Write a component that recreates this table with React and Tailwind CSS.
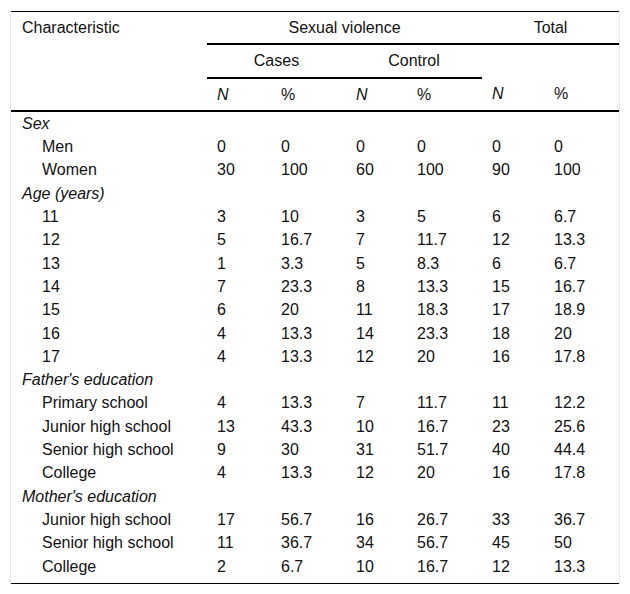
import React from 'react';

const groups = [
  {
    title: 'Sex',
    rows: [
      ['Men', '0', '0', '0', '0', '0', '0'],
      ['Women', '30', '100', '60', '100', '90', '100'],
    ],
  },
  {
    title: 'Age (years)',
    rows: [
      ['11', '3', '10', '3', '5', '6', '6.7'],
      ['12', '5', '16.7', '7', '11.7', '12', '13.3'],
      ['13', '1', '3.3', '5', '8.3', '6', '6.7'],
      ['14', '7', '23.3', '8', '13.3', '15', '16.7'],
      ['15', '6', '20', '11', '18.3', '17', '18.9'],
      ['16', '4', '13.3', '14', '23.3', '18', '20'],
      ['17', '4', '13.3', '12', '20', '16', '17.8'],
    ],
  },
  {
    title: "Father's education",
    rows: [
      ['Primary school', '4', '13.3', '7', '11.7', '11', '12.2'],
      ['Junior high school', '13', '43.3', '10', '16.7', '23', '25.6'],
      ['Senior high school', '9', '30', '31', '51.7', '40', '44.4'],
      ['College', '4', '13.3', '12', '20', '16', '17.8'],
    ],
  },
  {
    title: "Mother's education",
    rows: [
      ['Junior high school', '17', '56.7', '16', '26.7', '33', '36.7'],
      ['Senior high school', '11', '36.7', '34', '56.7', '45', '50'],
      ['College', '2', '6.7', '10', '16.7', '12', '13.3'],
    ],
  },
];

const App = () => {
  const th = 'py-[6px] leading-[19.3px] font-normal';
  const left = 'pl-[10px] text-left';
  const center = 'px-0 text-center';
  const td = 'pl-[10px] py-[2px] leading-[19.3px]';

  return (
    <div className="min-h-[594px] bg-white pt-[11px] pl-[10px] font-['Liberation_Sans',Arial,sans-serif] text-[16px] text-[#111]">
      <div className="w-[610px] border-x border-[#e8e8e8]">
        <table className="w-[608px] table-fixed border-t border-b border-black">
          <colgroup>
            <col className="w-[196px]" />
            <col className="w-[64px]" />
            <col className="w-[75px]" />
            <col className="w-[61px]" />
            <col className="w-[75px]" />
            <col className="w-[62px]" />
            <col className="w-[75px]" />
          </colgroup>
          <thead>
            <tr>
              <th rowSpan={3} className={`${th} pl-[11px] text-left align-top border-b-2 border-black`}>
                Characteristic
              </th>
              <th colSpan={4} className={`${th} ${center} border-b-2 border-black`}>
                Sexual violence
              </th>
              <th colSpan={2} className={`${th} ${center} border-b-2 border-black`}>
                Total
              </th>
            </tr>
            <tr>
              <th colSpan={2} className={`${th} ${center} border-b-2 border-black`}>
                Cases
              </th>
              <th colSpan={2} className={`${th} ${center} border-b-2 border-black`}>
                Control
              </th>
              <th colSpan={2} className={th}></th>
            </tr>
            <tr className="border-b-2 border-black">
              <th className={`${th} ${left} italic`}>N</th>
              <th className={`${th} ${left}`}>%</th>
              <th className={`${th} ${left} italic`}>N</th>
              <th className={`${th} ${left}`}>%</th>
              <th className={`${th} ${left} italic`}>N</th>
              <th className={`${th} ${left}`}>%</th>
            </tr>
          </thead>
          <tbody>
            {groups.map((g, gi) => (
              <React.Fragment key={g.title}>
                <tr>
                  <td colSpan={7} className={`${td} pl-[11px] italic`}>
                    {g.title}
                  </td>
                </tr>
                {g.rows.map((r, ri) => {
                  const last = gi === groups.length - 1 && ri === g.rows.length - 1;
                  return (
                    <tr key={r[0]}>
                      {r.map((c, ci) => (
                        <td
                          key={ci}
                          className={`${td} ${ci === 0 ? 'pl-[31px]' : ''} ${last ? 'pb-[7px]' : ''}`}
                        >
                          {c}
                        </td>
                      ))}
                    </tr>
                  );
                })}
              </React.Fragment>
            ))}
          </tbody>
        </table>
      </div>
    </div>
  );
};

export default App;
